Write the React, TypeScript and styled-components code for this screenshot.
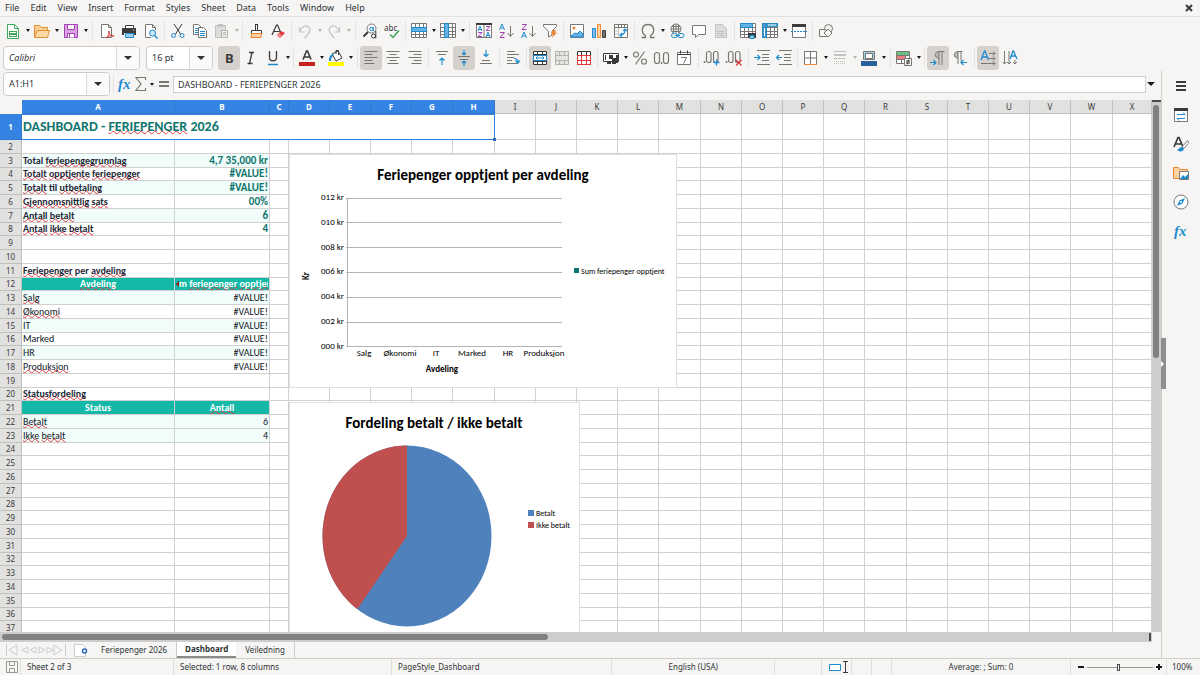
import React, { ReactNode } from 'react';
import styled, { createGlobalStyle, css } from 'styled-components';

const ui = '"Noto Sans", "Open Sans", sans-serif';
const cellFont = 'Carlito, Lato, sans-serif';
const dark = '#3a3a38';
const mid = '#797774';
const blue = '#1e8bcd';
const orange = '#ed8733';
const faint = '#c4c3c1';

const GlobalStyle = createGlobalStyle`
  * { box-sizing: border-box; }
  body { margin: 0; background: #f6f5f4; font: 9px/14px ${ui}; color: #2e3436; }
  button, input { font: inherit; color: inherit; }
`;

/* ---------- frame ---------- */

const Window = styled.div`
  display: flex;
  flex-direction: column;
  height: 100vh;
  overflow: hidden;
`;

const MenuBar = styled.nav`
  display: flex;
  align-items: center;
  height: 17px;
  padding: 0 5px;
  border-bottom: 1px solid #e3e1df;
`;

const MenuItem = styled.button`
  border: 0;
  padding: 0;
  margin-right: 11px;
  background: none;
`;

const CloseButton = styled.button`
  display: flex;
  border: 0;
  padding: 0;
  margin-left: auto;
  background: none;
`;

const Toolbar = styled.div`
  display: flex;
  flex: none;
  align-items: center;
  height: 27px;
  padding-left: 2px;
`;

const ToolButton = styled.button<{ $on?: boolean }>`
  display: flex;
  align-items: center;
  justify-content: center;
  width: 22px;
  height: 24px;
  padding: 0;
  border: 0;
  border-radius: 3px;
  background: ${(p) => (p.$on ? '#d5d1cd' : 'none')};
`;

const CaretButton = styled.button<{ $dim?: boolean }>`
  display: flex;
  align-items: center;
  justify-content: center;
  width: 7px;
  height: 22px;
  padding: 0;
  border: 0;
  background: none;
  &::after {
    content: '';
    border: solid transparent;
    border-width: 3px 2px 0;
    border-top-color: ${(p) => (p.$dim ? '#b5b3b0' : '#1a1a1a')};
  }
`;

const Separator = styled.span<{ $space: number }>`
  display: flex;
  flex: none;
  justify-content: center;
  width: ${(p) => p.$space}px;
  height: 20px;
  &::after {
    content: '';
    width: 1px;
    background: #e6e4e2;
  }
`;

const Combo = styled.div<{ $width: number }>`
  display: flex;
  flex: none;
  width: ${(p) => p.$width}px;
  height: 24px;
  border: 1px solid #cfcac5;
  border-radius: 4px;
  background: #fff;
  overflow: hidden;
`;

const ComboInput = styled.input<{ $italic?: boolean }>`
  flex: 1;
  min-width: 0;
  border: 0;
  padding: 0 5px;
  background: none;
  outline: 0;
  font-style: ${(p) => (p.$italic ? 'italic' : 'normal')};
`;

const ComboArrow = styled.button`
  display: flex;
  align-items: center;
  justify-content: center;
  width: 23px;
  padding: 0;
  border: 0;
  border-left: 1px solid #dcd8d5;
  background: #fbfafa;
  &::after {
    content: '';
    border: solid transparent;
    border-width: 4px 4px 0;
    border-top-color: #2e3436;
  }
`;

const FormatBar = styled(Toolbar)`
  padding-left: 3px;
`;

const ComboGroup = styled.div`
  display: flex;
  gap: 6px;
  margin-right: 5px;
`;

const Main = styled.div`
  display: flex;
  flex: 1;
  min-height: 0;
`;

const Document = styled.div`
  display: flex;
  flex: 1;
  flex-direction: column;
  min-width: 0;
`;

const FormulaBar = styled.div`
  display: flex;
  flex: none;
  align-items: center;
  height: 29px;
  padding: 0 5px 3px 3px;
`;

const FormulaTools = styled.div`
  display: flex;
  align-items: center;
  width: 63px;
  padding-left: 1px;
`;

const SmallTool = styled.button<{ $width: number }>`
  display: flex;
  flex: none;
  align-items: center;
  justify-content: center;
  width: ${(p) => p.$width}px;
  padding: 0;
  border: 0;
  background: none;
`;

const FormulaInput = styled.input`
  flex: 1;
  min-width: 0;
  height: 17px;
  padding: 0 4px;
  border: 1px solid #cfcfcf;
  background: #fff;
  outline: 0;
`;

const FormulaMore = styled(CaretButton)`
  width: 10px;
  &::after {
    border-width: 4px 4px 0;
  }
`;

/* ---------- sheet ---------- */

const SheetArea = styled.div`
  display: flex;
  flex: 1;
  min-height: 0;
`;

const Sheet = styled.div`
  position: relative;
  flex: 1;
  min-width: 0;
  overflow: hidden;
  background: #fff;
`;

const Grid = styled.table`
  width: 100%;
  table-layout: fixed;
  border-collapse: separate;
  border-spacing: 0;
  font: 10px/12px ${cellFont};
  color: #111827;
`;

const Col = styled.col<{ $width?: number }>`
  ${(p) => p.$width && `width: ${p.$width}px;`}
`;

const selectedHead = css`
  border-color: #3077cd;
  background: #3584e4;
  color: #fff;
  font-weight: 700;
`;

const HeadCell = styled.th<{ $selected?: boolean }>`
  height: 14px;
  padding: 0;
  border: solid #c0c0bf;
  border-width: 0 1px 1px 0;
  background: #e1e1e0;
  font: 8px/13px ${ui};
  color: #3a3a3a;
  overflow: hidden;
  ${(p) => p.$selected && selectedHead}
`;

const Corner = styled.td`
  padding: 0;
  background: #f6f5f4;
`;

const Row = styled.tr`
  height: 14px;
  &:nth-child(4n) {
    height: 13px;
  }
  &:first-child {
    height: 26px;
  }
`;

const RowHead = styled(HeadCell)`
  height: auto;
  line-height: 12px;
`;

const Cell = styled.td<{ $fill?: string; $align?: string; $bold?: boolean; $ink?: string; $large?: boolean }>`
  padding: 0 1px;
  border: solid #d0d0d0;
  border-width: 0 1px 1px 0;
  background: ${(p) => p.$fill || '#fff'};
  color: ${(p) => p.$ink || 'inherit'};
  font-size: ${(p) => (p.$large ? 11 : 10)}px;
  font-weight: ${(p) => (p.$bold ? 700 : 400)};
  text-align: ${(p) => p.$align || 'left'};
  white-space: nowrap;
`;

const TitleCell = styled.td`
  position: relative;
  padding: 0 1px;
  border: 1px solid #3584e4;
  border-left: 0;
  color: #0f766e;
  font-size: 14px;
  font-weight: 700;
  line-height: 22px;
`;

const FillHandle = styled.span`
  position: absolute;
  right: -2px;
  bottom: -2px;
  width: 3px;
  height: 3px;
  background: #2a6ab8;
`;

const Clip = styled.div`
  position: relative;
  display: flex;
  justify-content: center;
  overflow: hidden;
`;

const ClipMark = styled.span`
  position: absolute;
  left: 0;
  top: 0;
  bottom: 0;
  display: flex;
  align-items: center;
  background: #14b8a6;
  &::after {
    content: '';
    border: solid transparent;
    border-width: 3px 3px 3px 0;
    border-right-color: #8a1515;
  }
`;

const Misspelled = styled.span`
  text-decoration: underline wavy #e0393e 1px;
  text-underline-offset: -1px;
  text-decoration-skip-ink: none;
`;

const ChartFrame = styled.figure<{ $top: number; $width: number; $height: number }>`
  position: absolute;
  left: 289px;
  top: ${(p) => p.$top}px;
  width: ${(p) => p.$width}px;
  height: ${(p) => p.$height}px;
  margin: 0;
  outline: 1px solid #e0e0e0;
  outline-offset: -1px;
  background: #fff;
  svg {
    display: block;
    width: 100%;
    height: 100%;
    font: 9px ${cellFont};
  }
`;

const VScroll = styled.div`
  flex: none;
  width: 9px;
  padding: 3px 2px 0 1px;
  border-top: 2px solid #4a4a4a;
  background: #cdcdcc;
`;

const VThumb = styled.div`
  height: 48%;
  border-radius: 3px;
  background: #80807f;
`;

const HScroll = styled.div`
  display: flex;
  flex: none;
  align-items: center;
  justify-content: space-between;
  height: 10px;
  margin-right: 9px;
  padding: 0 1px 0 2px;
  background: #cdcdcc;
`;

const HThumb = styled.div`
  width: 47.5%;
  height: 6px;
  border-radius: 3px;
  background: #80807f;
`;

const HEnd = styled.div`
  width: 2px;
  height: 8px;
  background: #4a4a4a;
`;

/* ---------- sheet tabs, status, sidebar ---------- */

const TabBar = styled.div`
  display: flex;
  flex: none;
  height: 16px;
  padding-left: 5px;
`;

const TabTools = styled.div`
  display: flex;
  align-items: center;
  gap: 7px;
  width: 87px;
`;

const Tab = styled.button<{ $active?: boolean }>`
  padding: 0 9px;
  border: 0;
  border-right: 1px solid #cfcdcb;
  background: none;
  font-size: 8px;
  line-height: 14px;
  ${(p) =>
    p.$active &&
    css`
      padding: 0 8px;
      border-right: 0;
      border-bottom: 2px solid #8a8a89;
      background: #fff;
      font-weight: 700;
    `}
`;

const StatusBar = styled.footer`
  display: grid;
  grid-template-columns: 21px 153fr 218fr 220fr 210fr 30px 20px 20px 179fr 96px 33px;
  flex: none;
  height: 17px;
  border-top: 1px solid #d0cecb;
  font-size: 8px;
`;

const Status = styled.div<{ $center?: boolean; $pad?: number }>`
  display: flex;
  align-items: center;
  justify-content: ${(p) => (p.$center ? 'center' : 'flex-start')};
  min-width: 0;
  padding-left: ${(p) => p.$pad ?? 6}px;
  border-right: 1px solid #e2e0de;
  white-space: nowrap;
  &:last-child {
    border-right: 0;
  }
`;

const StatusSplit = styled(Status)`
  padding: 0;
  span {
    flex: 164;
    border-right: 1px solid #e2e0de;
    text-align: center;
  }
  &::after {
    content: '';
    flex: 46;
  }
`;

const ZoomSlider = styled.input`
  width: 66px;
  height: 13px;
  margin: 0 2px;
  appearance: none;
  background: linear-gradient(#9a9996, #9a9996) center / 100% 1px no-repeat;
  &::-webkit-slider-thumb {
    appearance: none;
    width: 3px;
    height: 7px;
    border: 1px solid #4a4a4a;
    background: #f6f5f4;
  }
`;

const ZoomButton = styled.button`
  display: flex;
  padding: 0;
  border: 0;
  background: none;
`;

const Sidebar = styled.aside`
  position: relative;
  display: flex;
  flex: none;
  flex-direction: column;
  align-items: center;
  gap: 7px;
  width: 39px;
  padding-top: 4px;
  border-left: 1px solid #d0cecb;
`;

const SideButton = styled(ToolButton)`
  height: 22px;
`;

const SideHandle = styled.button`
  position: absolute;
  left: -1px;
  top: 267px;
  display: flex;
  align-items: center;
  width: 5px;
  height: 51px;
  padding: 0;
  border: 0;
  background: #8f8f8e;
  &::after {
    content: '';
    border: solid transparent;
    border-width: 3px 0 3px 3px;
    border-left-color: #fff;
  }
`;

/* ---------- icons ---------- */

const S = (p: { d: string; c?: string; f?: string; w?: number }) => (
  <path d={p.d} stroke={p.c || dark} fill={p.f || 'none'} strokeWidth={p.w || 1} />
);

const gridLines = 'M.5 .5h15v14h-15zM.5 4.5h15M.5 8.5h15M.5 11.5h15M4.5 .5v14M8.5 .5v14M12.5 .5v14';

const icons: Record<string, ReactNode> = {
  new: <><S c="#3fa75a" f="#fff" d="M2.500 1.500h7l4 4v10h-11z" /><S c="#3fa75a" d="M9.500 1.500v4h4" /><path fill="#3fa75a" d="M4 8h8v6H4z" /><S c="#fff" d="M5 9.500h6M5 12.500h6" /></>,
  open: <><S c="#e08f35" f="#f9cf92" d="M.5 14.500v-12h5l2 2h6v3" /><S c="#e08f35" f="#fbd9a6" d="M.5 14.500l2.500-7h12.500l-2 7z" /></>,
  save: <><S c="#a33eb5" f="#d9a5e0" d="M1.500 1.500h13v13h-13z" /><S c="#a33eb5" f="#fff" d="M4.500 1.500h7v5h-7z" /><S c="#a33eb5" f="#fff" d="M4.500 14.500v-4h7v4M6.500 10.500v4" /></>,
  pdf: <><S c={mid} f="#fff" d="M2.500 1.500h7l3 3v10h-10z" /><S c={mid} d="M9.500 1.500v3h3" /><S c="#e0383a" d="M7 15c2-1 4-5 3-7-1 3 2 5 5 5-3-1-6 0-8 2z" /></>,
  print: <><S f="#fff" d="M4.500 5V2.500h8V5" /><path fill={dark} d="M1 5h14v7h-2v-2H3v2H1z" /><S c={blue} f="#9fd0ee" d="M4.500 10.500h8v4h-8z" /><path fill="#fff" d="M12 6.500h1v1h-1z" /></>,
  preview: <><S c={mid} f="#fff" d="M8 14.500H2.500v-13h7l3 3V7" /><S c={mid} d="M9.500 1.500v3h3" /><circle cx="9.500" cy="10" r="3" fill="#cfe7f7" stroke={blue} /><S c={blue} w={1.500} d="M11.500 12.500l3 3" /></>,
  cut: <><S d="M4 1l6.500 10M12 1L5.500 11" /><circle cx="3.500" cy="12.500" r="2" fill="none" stroke={blue} /><circle cx="12" cy="12.500" r="2" fill="none" stroke={blue} /></>,
  copy: <><S c={mid} f="#fff" d="M1.500 1.500h5l3 3v7h-8z" /><S c={blue} d="M3 5.500h4M3 7.500h4M3 9.500h3" /><S c={mid} f="#fff" d="M6.500 4.500h5l3 3v7h-8z" /><S c={blue} d="M8 8.500h5M8 10.500h5M8 12.500h5" /></>,
  paste: <><S c={faint} f="#dddcda" d="M1.500 2.500h10v12h-10z" /><path fill={faint} d="M4 1h5v3H4z" /><S c="#b5b3b0" f="#eeedec" d="M7.500 7.500h6v7h-6zM9 9.500h3M9 11.500h3" /></>,
  brush: <><S d="M7.500 1v6M9.500 1v6M7.500 1.500h2" /><S f="#fff" d="M3.500 7.500h10v3h-10z" /><S c={orange} f="#fbd2a3" d="M3.500 10.500h10l-.5 4h-10z" /></>,
  clear: <><S w={1.200} d="M2 12L6.500 2h1l3 7M3.500 8.500h6" /><path fill="#e0383a" d="M7 12l4-4 4 2-5 5z" /><path fill="#f18d8f" d="M7 12l2-2 3 3-2 2z" /></>,
  undo: <S c={faint} w={1.200} d="M2.500 4v5h5M2.500 9C5 3 9 1.500 11.500 4s2 5-4 11" />,
  redo: <S c={faint} w={1.200} d="M13.500 4v5h-5M13.500 9C11 3 7 1.500 4.500 4s-2 5 4 11" />,
  find: <><circle cx="9.500" cy="5.500" r="4.500" fill="#fff" stroke={mid} /><S w={2} d="M6 9l-4.500 4.500" /><circle cx="9.300" cy="6" r="1.700" fill="none" stroke={blue} /><S c={blue} d="M11.300 3.800v4.500" /><circle cx="11.500" cy="13" r="2" fill="#f6f5f4" stroke={dark} /><S d="M13.800 8v7.500" /></>,
  spell: <><text x="0" y="8" fontSize="8" fontFamily={ui} fill={dark}>abc</text><S c="#3fa75a" w={1.500} d="M6 11.500l3 3 6-7" /></>,
  row: <><S c={mid} f="#fff" d={gridLines} /><path fill="#63b1e5" stroke={blue} d="M.5 4.500h15v4h-15z" /></>,
  col: <><S c={mid} f="#fff" d={gridLines} /><path fill="#63b1e5" stroke={blue} d="M4.500 .5h4v14h-4z" /></>,
  sort: <><S c={mid} f="#fff" d="M.5 .5h15v14h-15zM8 2v12" /><path fill={dark} d="M0 0h16v2H0z" /><S c={blue} d="M2 8l2-5 2 5M2.500 6.500h3M10 14l2-5 2 5M10.500 12.500h3" /><S c="#a33eb5" d="M2 9.500h4L2 13.500h4M10 3.500h4L10 7.500h4" /></>,
  az: <><S c={blue} d="M1.500 7L4 1l2.500 6M2.500 5h3" /><S c="#a33eb5" d="M2 9.500h4.500L2 14.500h4.500" /><S c={mid} d="M12.500 3v10M9.500 10l3 3.500 3-3.500" /></>,
  za: <><S c="#a33eb5" d="M2 1.500h4.500L2 6.500h4.500" /><S c={blue} d="M1.500 15L4 9l2.500 6M2.500 13h3" /><S c={mid} d="M12.500 3v10M9.500 10l3 3.500 3-3.500" /></>,
  filter: <><S c={mid} f="#fff" d="M1.500 1.500h13v2L10 8v4l-3.500 2V8l-5-4.500z" /><path fill={orange} d="M11 7h3l-1 2.500h2L10 15l1-4H9z" /></>,
  image: <><S c={mid} f="#fff" d="M1.500 1.500h13v13h-13z" /><circle cx="5" cy="5" r="1.500" fill={orange} /><path fill="#63b1e5" stroke={blue} d="M2 13l4-3 2 1 3-3 3 3v3H2z" /></>,
  chart: <><path fill="#83bdf0" stroke={blue} d="M1.500 5.500h3v9h-3z" /><path fill="#fbd2a3" stroke={orange} d="M6.500 1.500h3v13h-3z" /><path fill={mid} stroke={dark} d="M11.500 7.500h3v7h-3z" /></>,
  pivot: <><S c={mid} f="#fff" d="M1.500 1.500h13v13h-13z" /><S c={faint} d="M5.500 5v9M2 8h3M2 11h3" /><S c={mid} d="M2 4.500h12M5.500 2v2M8.500 2v2M11.500 2v2" /><S c={blue} w={1.200} d="M7 12c3 0 5-2 5-5M10 8l2-2 2 2M9 10l-2 2 2 2" /></>,
  omega: <S c={mid} w={1.300} d="M1.500 14.500h4v-2c-5-3-4-11 2.500-11s7.500 8 2.500 11v2h4" />,
  link: <><circle cx="7" cy="6" r="5" fill="#fff" stroke={mid} /><S c={mid} d="M7 1v10M2 6h10M3 3.500h8M3 8.500h8M4.500 2v8M9.500 2v8" /><path fill="#f6f5f4" d="M2 10h14v6H2z" /><rect x="2.500" y="10.500" width="6" height="4" rx="2" fill="none" stroke={blue} /><rect x="9" y="10.500" width="6" height="4" rx="2" fill="none" stroke={blue} /><S c={blue} d="M6 12.500h5" /></>,
  comment: <S c={mid} f="#fff" d="M1.500 2.500h13v9h-7l-3 3v-3h-3z" />,
  note: <><S c={faint} f="#dddcda" d="M2.500 1.500h7l4 4v9h-11z" /><S c={faint} d="M4 8.500h7M4 10.500h7M4 12.500h7" /></>,
  printArea: <><S c={mid} f="#fff" d={gridLines} /><path fill="#63b1e5" stroke={blue} d="M.5 .5h12v4H.5z" /><path fill={dark} d="M8 10h8v5H8z" /><S c={blue} f="#9fd0ee" d="M10 12.500h4v3h-4z" /></>,
  freeze: <><S c={mid} f="#fff" d={gridLines} /><path fill={blue} d="M0 0h5v15H0zM0 0h16v4H0z" opacity=".85" /><S c="#fff" d="M2.500 5v8M6 2h8" /></>,
  split: <><S c={mid} f="#fff" d="M1.500 1.500h13v13h-13z" /><path fill={dark} d="M1 1h14v3H1z" /><path stroke={blue} strokeDasharray="2 1" d="M0 8.500h16" /></>,
  shapes: <><S c={mid} d="M1.500 6.500h7v7h-7z" /><circle cx="10.500" cy="5.500" r="4" fill="#f6f5f4" fillOpacity=".6" stroke={mid} /><S c={mid} f="#f6f5f4" d="M10 6l4 4-4 4-4-4z" /></>,
  bold: <text x="4" y="13" fontSize="13" fontWeight="700" fontFamily={ui} fill={dark}>B</text>,
  italic: <S w={1.300} d="M6 2.500h5M4.500 13.500h5M9 2.500l-2.500 11" />,
  underline: <><S w={1.300} d="M4.500 1v6.500c0 4.500 7 4.500 7 0V1" /><S c={blue} w={1.500} d="M3 14.500h10" /></>,
  fontColor: <><S w={1.600} d="M4 9.500L7.500 1h1L12 9.500M5.500 7h5" /><path fill="#c9211e" d="M0 12h16v4H0z" /></>,
  highlight: <><S f="#fff" d="M4 4l6-3 4 7-6 3z" /><S d="M8 4V.5h2.500V5" /><path fill={blue} d="M1 11c0-4 1-6 4-7l1 1c-2 1-3 3-3 6z" /><path fill="#ffff00" d="M0 12h16v4H0z" /></>,
  left: <S c={mid} d="M1.500 1.500h13M1.500 4.500h8M1.500 7.500h13M1.500 10.500h8M1.500 13.500h10" />,
  center: <S c={mid} d="M1.500 1.500h13M4.500 4.500h7M1.500 7.500h13M4.500 10.500h7M2.500 13.500h11" />,
  right: <S c={mid} d="M1.500 1.500h13M6.500 4.500h8M1.500 7.500h13M6.500 10.500h8M4.500 13.500h10" />,
  top: <><S c={mid} d="M2 1.500h12M4 4.500h8" /><S c={blue} w={1.200} d="M8 15V8M5.500 10.500L8 8l2.500 2.500" /></>,
  middle: <><S c={mid} d="M2 6.500h12M4 9.500h8" /><S c={blue} w={1.200} d="M8 0v5M6 3l2 2 2-2M8 16v-5M6 13l2-2 2 2" /></>,
  bottom: <><S c={mid} d="M4 10.500h8M2 13.500h12" /><S c={blue} w={1.200} d="M8 0v6M5.500 4L8 6.500 10.500 4" /></>,
  wrap: <><S c={mid} d="M2 1.500h8M2 4.500h12M2 7.500h7M2 10.500h5M2 13.500h11" /><S c={blue} w={1.200} d="M9 8.500c3 0 4 1 4 4M10.500 10.500l2.500 2.500 2-2.500" /></>,
  merge: <><S f="#fff" d="M1.500 1.500h13v13h-13zM1.500 4.500h13M1.500 11.500h13M5.500 1.500v3M10.500 1.500v3M5.500 11.500v3M10.500 11.500v3" /><path fill="#fff" stroke={blue} d="M1.500 5.500h13v5h-13zM4 8h8M5.500 6.500L4 8l1.500 1.500M10.500 6.500L12 8l-1.500 1.500" /></>,
  mergeDim: <S c="#b5b3b0" f="#e6e4e2" d="M1.500 1.500h13v13h-13zM1.500 5.500h13M1.500 10.500h13M5.500 1.500v4M10.500 1.500v4M5.500 10.500v4M10.500 10.500v4" />,
  unmerge: <><S f="#fff" d="M1.500 1.500h13v13h-13zM5.500 1.500v4M10.500 1.500v4" /><S c="#e0383a" d="M1.500 5.500h13v9h-13zM1.500 10.500h13M5.500 5.500v9M10.500 5.500v9" /></>,
  currency: <><S f="#fff" d="M.5 3.500h15v8H.5z" /><path fill={dark} d="M6 5h4v4H6zM2 5h1v5H2zM9 8h4v6H9zM4 11h4v3H4zM13 5h2v8h-2z" /></>,
  percent: <><S c={mid} w={1.200} d="M12.500 1.500l-9 13" /><circle cx="4" cy="4.500" r="2.500" fill="none" stroke={mid} strokeWidth="1.200" /><circle cx="12" cy="11.500" r="2.500" fill="none" stroke={mid} strokeWidth="1.200" /></>,
  number: <><rect x=".5" y="2.500" width="5" height="11" rx="2.500" fill="none" stroke={mid} strokeWidth="1.200" /><rect x="9.500" y="2.500" width="5" height="11" rx="2.500" fill="none" stroke={mid} strokeWidth="1.200" /><S c={mid} w={1.500} d="M7.500 12v2" /></>,
  date: <><S c={mid} f="#fff" d="M1.500 2.500h13v12h-13z" /><S d="M1.500 4.500h13M4.500 .5v3M11.500 .5v3" /><S c={mid} d="M5 7.500h5.500l-3 6" /></>,
  addDec: <><rect x="2.500" y="1.500" width="4.500" height="11" rx="2" fill="none" stroke={mid} strokeWidth="1.200" /><rect x="9.500" y="1.500" width="4.500" height="11" rx="2" fill="none" stroke={mid} strokeWidth="1.200" /><S c={mid} w={1.500} d="M.5 11v2" /><S c={blue} w={1.300} d="M12.500 9.500v6M9.500 12.500h6" /></>,
  delDec: <><rect x="2.500" y="1.500" width="4.500" height="11" rx="2" fill="none" stroke={mid} strokeWidth="1.200" /><rect x="9.500" y="1.500" width="4.500" height="11" rx="2" fill="none" stroke={mid} strokeWidth="1.200" /><S c={mid} w={1.500} d="M.5 11v2" /><S c="#e0383a" w={1.300} d="M10 10l5.500 5.500M15.500 10L10 15.500" /></>,
  indent: <><S c={mid} d="M3 .5h13M8 4.500h7M8 7.500h7M8 10.500h7M3 14.500h13" /><S c={blue} w={1.200} d="M0 7.500h6M3.500 5L6 7.500 3.500 10" /></>,
  outdent: <><S c={mid} d="M3 .5h13M8 4.500h7M8 7.500h7M8 10.500h7M3 14.500h13" /><S c={blue} w={1.200} d="M0 7.500h6M3 5L.5 7.500 3 10" /></>,
  borders: <><S c={mid} f="#fff" d="M1.500 1.500h12v13h-12zM7.500 1.500v13M1.500 8h12" /><S c={orange} d="M1 14.500h13" /></>,
  lines: <><path fill={faint} d="M2 1h12v1H2zM2 4h12v2H2z" /><path stroke="#b5b3b0" strokeDasharray="3 1" d="M2 8.500h12" /><path stroke={faint} strokeDasharray="1 1" d="M2 11.500h12M2 13.500h12" /></>,
  lineColor: <><S c={mid} f="#9fd0ee" d="M2.500 1.500h11v8h-11z" /><S c={mid} f="#fff" d="M4.500 3.500h7v5h-7z" /><path fill="#2a6099" d="M0 11h16v5H0z" /></>,
  conditional: <><S c={mid} f="#fff" d="M.5 1.500h13v12H.5zM5.500 1.500v12M9.500 1.500v12M.5 5.500h13M.5 9.500h13" /><path fill="#6cc182" d="M1 2h12v3H1z" /><path fill="#ee7d7f" d="M1 6h8v3H1z" /><S c={mid} f="#fff" d="M8.500 8.500h7v7h-7z" /><S d="M10 11h4M10 13h4M13 9.500l-2 5" /></>,
  ltr: <><S c={mid} f="#bbb9b6" d="M9 8C4 8 4 1.500 9 1.500V15M9 1.500h5.500M12 1.500V15" /><S c={blue} w={1.200} d="M0 12.500h6M3.500 10L6 12.500 3.500 15" /></>,
  rtl: <><S c={mid} f="#bbb9b6" d="M6 8C1 8 1 1.500 6 1.500V14M6 1.500h4.500M9 1.500V11" /><S c={blue} w={1.200} d="M9 12.500h6M11.500 10L9 12.500l2.500 2.500" /></>,
  horizontal: <><S c={blue} w={1.300} d="M1 10L4.500 1h.5l3.500 9M2.500 7h5" /><S c={mid} d="M9 3.500h6M13 1.500l2 2-2 2M9 8.500h6M13 6.500l2 2-2 2M1 13.500h14M13 11.500l2 2-2 2" /></>,
  vertical: <><S c={blue} w={1.300} d="M8 9l3-8h.5L15 9M9.500 6h4.500" /><S c={mid} d="M2.500 1v13M.5 12l2 2 2-2M7 1v13M5 12l2 2 2-2M13 10v4M11 12l2 2 2-2" /></>,
  fx: <text x="1" y="13" fontSize="15" fontStyle="italic" fontWeight="700" fontFamily='"Liberation Serif", serif' fill={blue}>fx</text>,
  sigma: <S c={mid} w={1.200} d="M12.500 4V1.500H3l5 6.500-5 6.500h9.500V12" />,
  equals: <path fill={mid} d="M3 5h10v2H3zM3 9h10v2H3z" />,
  menu: <path fill={dark} d="M3 3h10v2H3zM3 7h10v2H3zM3 11h10v2H3z" />,
  properties: <><S c={mid} f="#fff" d="M1.500 1.500h13v13h-13z" /><path fill={dark} d="M1 1h14v3H1z" /><S c={blue} d="M4 7.500h8M10 5.500l2 2M12 11.500H4M6 13.500l-2-2" /></>,
  styles: <><S w={1.700} d="M1 11L5 1.500h1L9.500 10M2.500 8h6" /><S c={mid} f="#fff" d="M9 11l5-6c2 0 2 1 1 2.500l-4 5z" /><path fill={blue} d="M4 14c2 0 2-3 5-3l2 2c-1 3-5 3-7 1z" /></>,
  gallery: <><S c={orange} f="#fbd2a3" d="M.5 13.500v-11h5l1 2h8v9z" /><S c={mid} f="#fff" d="M6.500 6.500h9v8h-9z" /><path fill={blue} d="M7 14l3-4 2 2 3-3v5z" /></>,
  navigator: <><circle cx="8" cy="8" r="7" fill="#fff" stroke={mid} /><path fill={blue} d="M12 4l-2.500 5.500L4 12l2.500-5.500z" /><circle cx="8" cy="8" r="1" fill="#fff" /></>,
};

const Icon = ({ name }: { name: string }) => (
  <svg width="16" height="16" viewBox="0 0 16 16" overflow="visible" aria-hidden="true">{icons[name]}</svg>
);

/* ---------- data ---------- */

// Tool entries: icon name; '+' adds a drop-down, '-' a disabled one, '!' marks a pressed tool, a number is a separator's width.
type Tool = string | number;

const standardTools: Tool[] = [
  'new+', 'open+', 'save+', 7, 'pdf', 'print', 'preview', 5, 'cut', 'copy', 'paste-', 5, 'brush', 'clear', 5,
  'undo-', 'redo-', 7, 'find', 'spell', 5, 'row+', 'col+', 7, 'sort', 'az', 'za', 'filter', 5,
  'image', 'chart', 'pivot', 5, 'omega+', 'link', 'comment', 'note', 5, 'printArea', 'freeze+', 'split', 5, 'shapes',
];

const formatTools: Tool[] = [
  'bold!', 'italic', 'underline+', 5, 'fontColor+', 'highlight+', 6, 'left!', 'center', 'right', 5,
  'top', 'middle!', 'bottom', 5, 'wrap', 5, 'merge!', 'mergeDim', 'unmerge', 5,
  'currency+', 'percent', 'number', 'date', 6, 'addDec', 'delDec', 6, 'indent', 'outdent', 5,
  'borders+', 'lines-', 'lineColor+', 6, 'conditional+', 5, 'ltr!', 'rtl', 6, 'horizontal!', 'vertical',
];

const Tools = ({ items }: { items: Tool[] }) => (
  <>
    {items.map((item, i) => {
      if (typeof item === 'number') return <Separator key={i} $space={item} />;
      const name = item.replace(/[-+!]/, '');
      return (
        <React.Fragment key={i}>
          <ToolButton aria-label={name} $on={item.endsWith('!')}><Icon name={name} /></ToolButton>
          {/[-+]$/.test(item) && <CaretButton aria-label={`${name} options`} $dim={item.endsWith('-')} />}
        </React.Fragment>
      );
    })}
  </>
);

const columns = 'ABCDEFGHIJKLMNOPQRSTUVWX'.split('');
const columnWidths: (number | undefined)[] = columns.map((_, i) => {
  if (i < 3) return [153, 95, 19][i];
  if (i === columns.length - 1) return undefined;
  return i % 5 === 2 ? 42 : 41;
});

interface RowData { a?: string; b?: string; kind: 'kpi' | 'section' | 'head' | 'item'; fill?: boolean }

const sheet: Record<number, RowData> = {
  3: { kind: 'kpi', a: 'Total feriepengegrunnlag', b: '4,7 35,000 kr', fill: true },
  4: { kind: 'kpi', a: 'Totalt opptjente feriepenger', b: '#VALUE!' },
  5: { kind: 'kpi', a: 'Totalt til utbetaling', b: '#VALUE!', fill: true },
  6: { kind: 'kpi', a: 'Gjennomsnittlig sats', b: '00%' },
  7: { kind: 'kpi', a: 'Antall betalt', b: '6', fill: true },
  8: { kind: 'kpi', a: 'Antall ikke betalt', b: '4' },
  11: { kind: 'section', a: 'Feriepenger per avdeling' },
  12: { kind: 'head', a: 'Avdeling', b: 'Sum feriepenger opptjent' },
  13: { kind: 'item', a: 'Salg', b: '#VALUE!', fill: true },
  14: { kind: 'item', a: 'Økonomi', b: '#VALUE!' },
  15: { kind: 'item', a: 'IT', b: '#VALUE!', fill: true },
  16: { kind: 'item', a: 'Marked', b: '#VALUE!' },
  17: { kind: 'item', a: 'HR', b: '#VALUE!', fill: true },
  18: { kind: 'item', a: 'Produksjon', b: '#VALUE!' },
  20: { kind: 'section', a: 'Statusfordeling' },
  21: { kind: 'head', a: 'Status', b: 'Antall' },
  22: { kind: 'item', a: 'Betalt', b: '6', fill: true },
  23: { kind: 'item', a: 'Ikke betalt', b: '4', fill: true },
};

const dictionary = new Set(['DASHBOARD', '-', '2026', 'Total', 'til', 'per', 'IT', 'Marked', 'HR', 'Status', 'Sum']);

const Spelled = ({ text }: { text: string }) => (
  <span>
    {text.split(' ').map((word, i) => (
      <React.Fragment key={i}>
        {i > 0 && ' '}
        {dictionary.has(word) ? word : <Misspelled>{word}</Misspelled>}
      </React.Fragment>
    ))}
  </span>
);

const DataCells = ({ row }: { row?: RowData }) => {
  if (!row) return <><Cell /><Cell /></>;
  const { kind, a = '', b = '' } = row;
  if (kind === 'head') {
    return (
      <>
        <Cell $fill="#14b8a6" $ink="#fff" $bold $align="center"><Spelled text={a} /></Cell>
        <Cell $fill="#14b8a6" $ink="#fff" $bold $align="center">
          {b.length > 20 ? <Clip><Spelled text={b} /><ClipMark /></Clip> : <Spelled text={b} />}
        </Cell>
      </>
    );
  }
  const fill = row.fill ? '#f0fdfa' : undefined;
  const kpi = kind === 'kpi';
  return (
    <>
      <Cell $fill={fill} $bold={kind !== 'item'} $ink={kind === 'item' ? undefined : '#1f2937'}><Spelled text={a} /></Cell>
      <Cell $fill={fill} $bold={kpi} $large={kpi} $ink={kpi ? '#0f766e' : undefined} $align="right">{b}</Cell>
    </>
  );
};

/* ---------- charts ---------- */

const departments = ['Salg', 'Økonomi', 'IT', 'Marked', 'HR', 'Produksjon'];
const ticks = ['012 kr', '010 kr', '008 kr', '006 kr', '004 kr', '002 kr', '000 kr'];

const BarChart = () => (
  <ChartFrame $top={54} $width={388} $height={234}>
    <svg viewBox="0 0 388 234" role="img" aria-label="Feriepenger opptjent per avdeling">
      <text x="194" y="26" fontSize="15" fontWeight="700" textAnchor="middle">Feriepenger opptjent per avdeling</text>
      {ticks.map((tick, i) => (
        <g key={tick}>
          <text x="55" y={46 + Math.round(i * 24.8)} textAnchor="end">{tick}</text>
          <path stroke="#b3b3b3" d={`M57 ${Math.round(43.5 + i * 24.8) + 0.5}h216`} />
        </g>
      ))}
      <path stroke="#b3b3b3" d="M58.500 44v149" />
      {departments.map((name, i) => (
        <text key={name} x={75 + i * 36} y="202" textAnchor="middle">{name}</text>
      ))}
      <text x="153" y="218" fontWeight="700" textAnchor="middle">Avdeling</text>
      <text transform="translate(20 122) rotate(-90)" fontWeight="700" textAnchor="middle">Kr</text>
      <path fill="#0f766e" d="M285 114h5v5h-5z" />
      <text x="292" y="120" fontSize="8">Sum feriepenger opptjent</text>
    </svg>
  </ChartFrame>
);

const PieChart = () => (
  <ChartFrame $top={302} $width={291} $height={240}>
    <svg viewBox="0 0 291 240" role="img" aria-label="Fordeling betalt / ikke betalt">
      <text x="145" y="26" fontSize="15" fontWeight="700" textAnchor="middle">Fordeling betalt / ikke betalt</text>
      <ellipse cx="118" cy="134" rx="84.500" ry="90.500" fill="#4f81bd" />
      <path fill="#c0504d" d="M118 134V43.500A84.500 90.500 0 0 0 68.300 207.200z" />
      <path fill="#4f81bd" d="M239 108h6v6h-6z" />
      <text x="247" y="114" fontSize="8">Betalt</text>
      <path fill="#c0504d" d="M239 120h6v6h-6z" />
      <text x="247" y="126" fontSize="8">Ikke betalt</text>
    </svg>
  </ChartFrame>
);

/* ---------- page ---------- */

const menus = ['File', 'Edit', 'View', 'Insert', 'Format', 'Styles', 'Sheet', 'Data', 'Tools', 'Window', 'Help'];
const rowNumbers = Array.from({ length: 37 }, (_, i) => i + 1);

export default function App() {
  return (
    <Window>
      <GlobalStyle />
      <MenuBar>
        {menus.map((m) => <MenuItem key={m}>{m}</MenuItem>)}
        <CloseButton aria-label="Close document">
          <svg width="11" height="8" viewBox="0 0 11 8"><path stroke={dark} strokeWidth="2" d="M2 1l6 6M8 1L2 7" /></svg>
        </CloseButton>
      </MenuBar>
      <Toolbar><Tools items={standardTools} /></Toolbar>
      <FormatBar>
        <ComboGroup>
          <Combo $width={137}>
            <ComboInput aria-label="Font name" defaultValue="Calibri" $italic />
            <ComboArrow aria-label="Font list" />
          </Combo>
          <Combo $width={67}>
            <ComboInput aria-label="Font size" defaultValue="16 pt" />
            <ComboArrow aria-label="Size list" />
          </Combo>
        </ComboGroup>
        <Tools items={formatTools} />
      </FormatBar>
      <Main>
        <Document>
          <FormulaBar>
            <Combo $width={107}>
              <ComboInput aria-label="Name box" defaultValue="A1:H1" />
              <ComboArrow aria-label="Name list" />
            </Combo>
            <FormulaTools>
              <Separator $space={5} />
              <SmallTool $width={18} aria-label="Function wizard"><Icon name="fx" /></SmallTool>
              <SmallTool $width={14} aria-label="Select function"><Icon name="sigma" /></SmallTool>
              <CaretButton aria-label="Function options" />
              <SmallTool $width={18} aria-label="Formula"><Icon name="equals" /></SmallTool>
            </FormulaTools>
            <FormulaInput aria-label="Input line" defaultValue="DASHBOARD - FERIEPENGER 2026" />
            <FormulaMore aria-label="Expand formula bar" />
          </FormulaBar>
          <SheetArea>
            <Sheet>
              <Grid>
                <colgroup>
                  <Col $width={22} />
                  {columnWidths.map((w, i) => <Col key={i} $width={w} />)}
                </colgroup>
                <thead>
                  <tr>
                    <Corner />
                    {columns.map((c, i) => <HeadCell key={c} scope="col" $selected={i < 8}>{c}</HeadCell>)}
                  </tr>
                </thead>
                <tbody>
                  {rowNumbers.map((n) => (
                    <Row key={n}>
                      <RowHead scope="row" $selected={n === 1}>{n}</RowHead>
                      {n === 1 ? (
                        <TitleCell colSpan={8}><Spelled text="DASHBOARD - FERIEPENGER 2026" /><FillHandle /></TitleCell>
                      ) : (
                        <DataCells row={sheet[n]} />
                      )}
                      {columns.slice(n === 1 ? 8 : 2).map((c) => <Cell key={c} />)}
                    </Row>
                  ))}
                </tbody>
              </Grid>
              <BarChart />
              <PieChart />
            </Sheet>
            <VScroll><VThumb /></VScroll>
          </SheetArea>
          <HScroll><HThumb /><HEnd /></HScroll>
          <TabBar>
            <TabTools>
              <svg width="62" height="12" viewBox="0 0 62 12" fill="none" stroke="#cfcdcb" aria-hidden="true">
                <path d="M1.500 0v12M12 1L4 6l8 5zM23 3l-6 3 6 3zM31 3l-6 3 6 3zM34 3l6 3-6 3zM42 3l6 3-6 3zM49 1l8 5-8 5zM60.500 0v12" />
              </svg>
              <svg width="14" height="13" viewBox="0 0 14 13" aria-hidden="true">
                <path fill="#fff" stroke="#cfcdcb" d="M.5 .5h8l3 3v9H.5z" />
                <circle cx="10.500" cy="7" r="2" fill="#fff" stroke="#2a6ab8" strokeWidth="1.500" />
              </svg>
            </TabTools>
            <Tab>Feriepenger 2026</Tab>
            <Tab $active>Dashboard</Tab>
            <Tab>Veiledning</Tab>
          </TabBar>
        </Document>
        <Sidebar>
          {['menu', 'properties', 'styles', 'gallery', 'navigator', 'fx'].map((n) => (
            <SideButton key={n} aria-label={n}><Icon name={n} /></SideButton>
          ))}
          <SideHandle aria-label="Hide sidebar" />
        </Sidebar>
      </Main>
      <StatusBar>
        <Status>
          <svg width="12" height="12" viewBox="0 0 12 12" fill="none" stroke="#9a9996" aria-hidden="true">
            <path d="M.5 .5h11v11H.5zM3.500 .5v4h5v-4M3.500 11.500v-4h5v4" />
          </svg>
        </Status>
        <Status>Sheet 2 of 3</Status>
        <Status>Selected: 1 row, 8 columns</Status>
        <Status>PageStyle_Dashboard</Status>
        <StatusSplit><span>English (USA)</span></StatusSplit>
        <Status>
          <svg width="22" height="12" viewBox="0 0 22 12" fill="none" aria-hidden="true">
            <path stroke={blue} fill="#fff" d="M1.500 3.500h11v6h-11z" />
            <path stroke={dark} d="M15 .5h5M17.500 .5v11M15 11.500h5" />
          </svg>
        </Status>
        <Status />
        <Status />
        <Status $center $pad={0}>Average: ; Sum: 0</Status>
        <Status $center $pad={3}>
          <ZoomButton aria-label="Zoom out"><svg width="8" height="8" viewBox="0 0 8 8"><path fill="#1a1a1a" d="M1 3h6v2H1z" /></svg></ZoomButton>
          <ZoomSlider type="range" aria-label="Zoom" min={0} max={100} defaultValue={48} />
          <ZoomButton aria-label="Zoom in"><svg width="8" height="8" viewBox="0 0 8 8"><path fill="#1a1a1a" d="M1 3h6v2H1zM3 1h2v6H3z" /></svg></ZoomButton>
        </Status>
        <Status $pad={5}>100%</Status>
      </StatusBar>
    </Window>
  );
}
